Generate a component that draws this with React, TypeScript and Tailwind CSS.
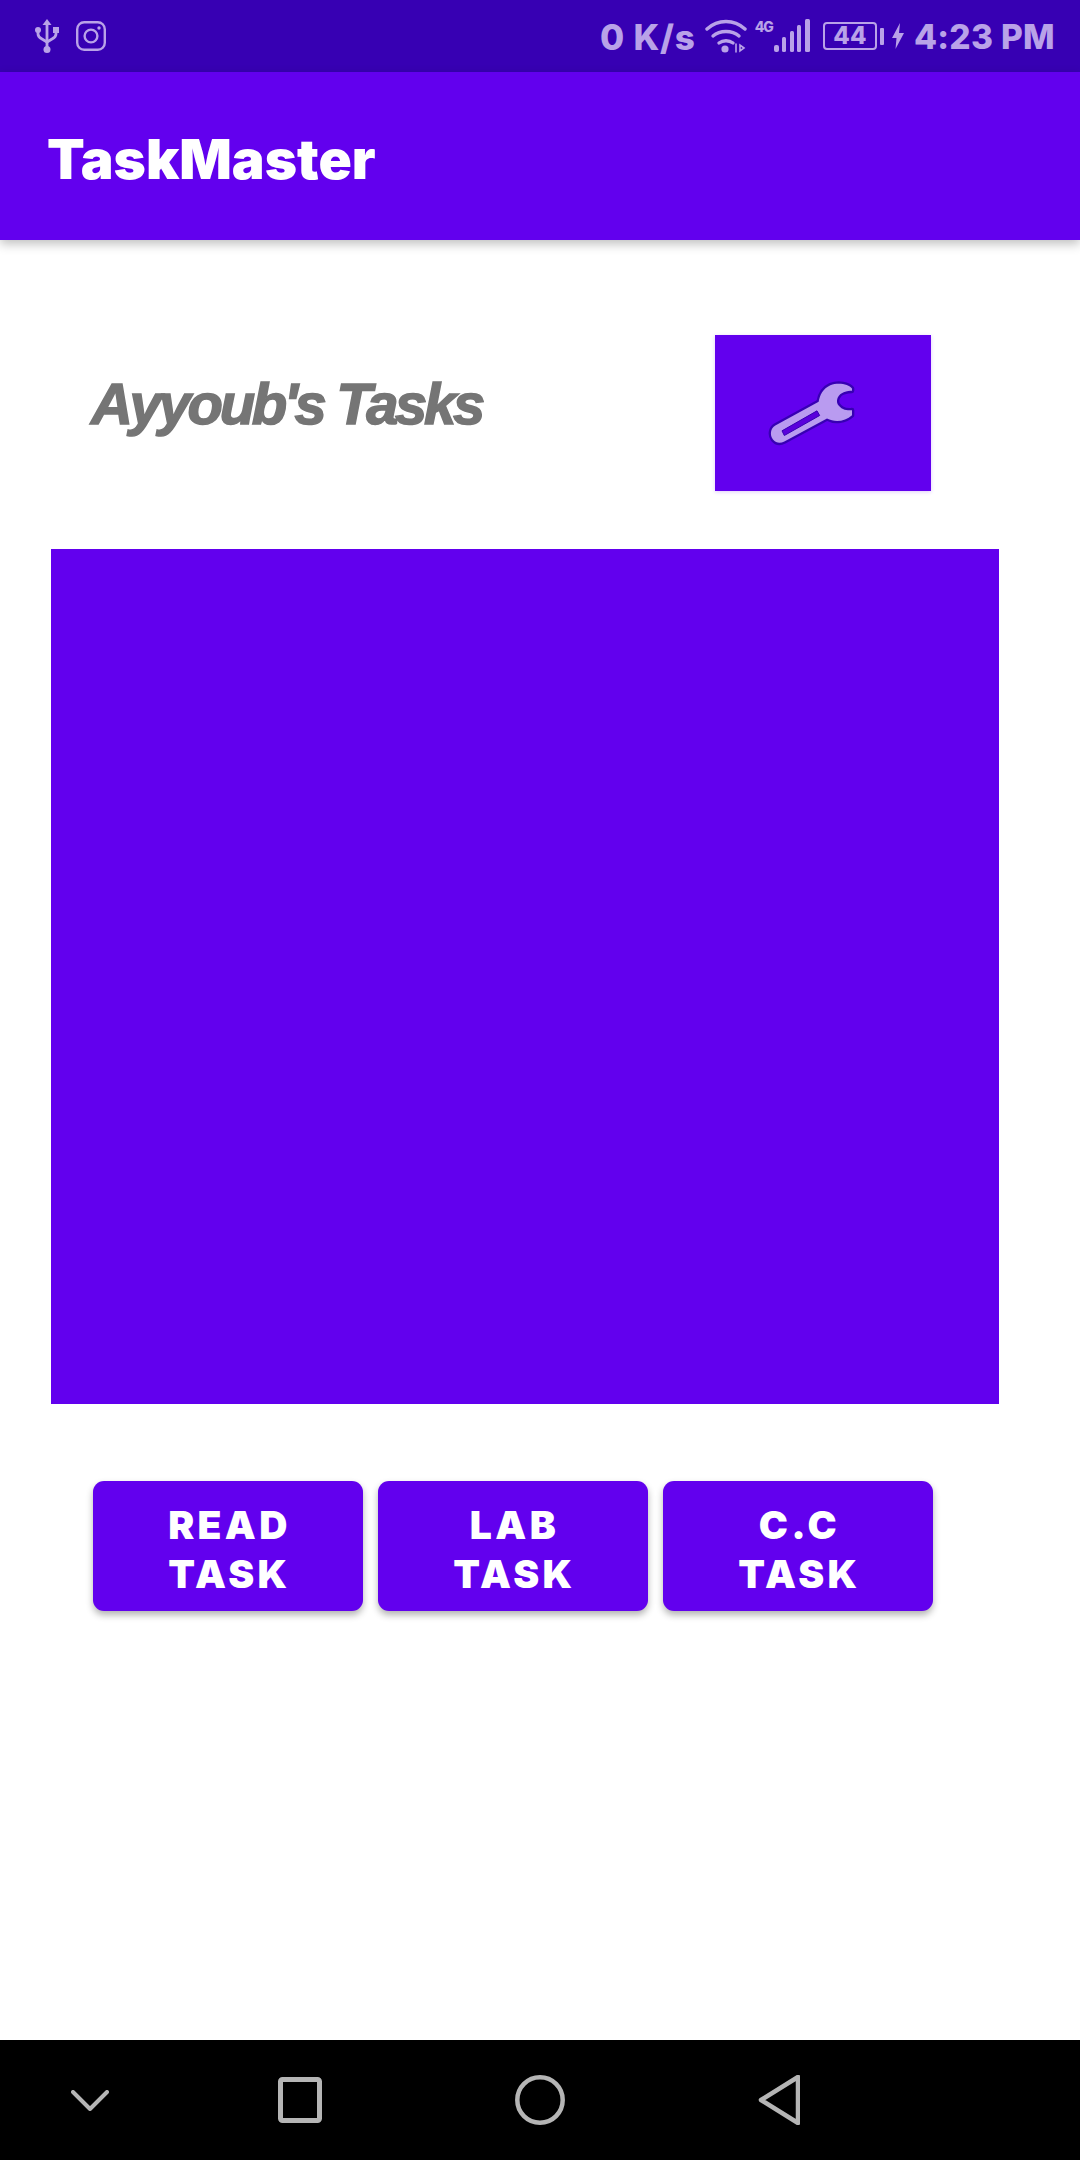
import React from "react";

const statusColor = "#b9a2e8";

function UsbIcon() {
  return (
    <svg width="24" height="34" viewBox="0 0 24 34" fill="none" stroke={statusColor} strokeWidth="2.8">
      <path d="M12 4v26" />
      <path d="M12 0l4.5 6h-9z" fill={statusColor} stroke="none" />
      <path d="M3 11v4c0 3 2 4 4 5l5 3 5-3c2-1 4-2 4-5v-4" />
      <circle cx="3" cy="11" r="3" fill={statusColor} stroke="none" />
      <rect x="18" y="8" width="6" height="6" fill={statusColor} stroke="none" />
      <circle cx="12" cy="30.5" r="3.5" fill={statusColor} stroke="none" />
    </svg>
  );
}

function InstaIcon() {
  return (
    <svg width="30" height="30" viewBox="0 0 30 30" fill="none" stroke={statusColor} strokeWidth="2.4">
      <rect x="1.2" y="1.2" width="27.6" height="27.6" rx="7" />
      <circle cx="15" cy="15" r="6.4" />
      <circle cx="23" cy="7" r="1.7" fill={statusColor} stroke="none" />
    </svg>
  );
}

function WifiIcon() {
  return (
    <svg width="42" height="34" viewBox="0 0 42 34" fill="none" stroke={statusColor} strokeWidth="3.4" strokeLinecap="round">
      <path d="M2 10c11-10 27-10 38 0" />
      <path d="M8 17c7-6 19-6 26 0" />
      <path d="M14 24c4-3 10-3 14 0" />
      <circle cx="20" cy="30" r="3.6" fill={statusColor} stroke="none" />
      <path d="M31 25v8M39 29l-4-3v6z" strokeWidth="1.6" />
    </svg>
  );
}

function SignalIcon() {
  return (
    <svg width="36" height="34" viewBox="0 0 36 34" fill={statusColor}>
      <rect x="0" y="26" width="5" height="7" rx="2" />
      <rect x="8" y="18" width="4" height="15" rx="1.5" />
      <rect x="16" y="12" width="4" height="21" rx="1.5" />
      <rect x="23" y="6" width="4" height="27" rx="1.5" />
      <rect x="31" y="0" width="5" height="33" rx="1.5" />
    </svg>
  );
}

function BoltIcon() {
  return (
    <svg width="12" height="26" viewBox="0 0 12 26" fill={statusColor}>
      <path d="M8 0L0 15h4.5L3.5 26 12 10H7z" />
    </svg>
  );
}

function WrenchIcon() {
  return (
    <svg width="90" height="67" viewBox="260 180 270 200">
      <path
        d="M515 205C505 192 475 186 450 195C428 205 418 225 415 245L285 316C270 325 268 345 278 358C288 370 300 370 312 364L440 295C465 308 495 303 515 285V270C500 272 482 268 472 252C466 238 474 222 490 216C500 213 508 212 515 212Z"
        fill="#b99bf0"
        stroke="#3700b3"
        strokeWidth="14"
        strokeLinejoin="round"
        paintOrder="stroke"
      />
      <path d="M305 332L410 272L418 286L312 346Z" fill="#5a00dc" stroke="#3700b3" strokeWidth="3" />
    </svg>
  );
}

function TaskButton({ top }: { top: string }) {
  return (
    <button className="flex h-[130px] w-[270px] flex-col items-center justify-center rounded-[11px] bg-[#6200ee] pt-[5px] pl-[3px] font-['Inter',sans-serif] text-[39px] leading-[49px] font-black tracking-[3.4px] text-white shadow-[0_4px_7px_rgba(0,0,0,0.3)]">
      <span>{top}</span>
      <span>TASK</span>
    </button>
  );
}

export default function App() {
  return (
    <div className="flex h-[2160px] w-[1080px] flex-col overflow-hidden bg-white">
      {/* status bar */}
      <div className="flex h-[72px] shrink-0 items-center bg-[#3700b3] pr-[25px] pl-[35px] font-['Inter',sans-serif] font-extrabold text-[#b9a2e8]">
        <UsbIcon />
        <div className="ml-[17px]">
          <InstaIcon />
        </div>
        <span className="mt-[2px] ml-auto text-[35px] tracking-[0.8px]">0 K/s</span>
        <div className="ml-[9px]">
          <WifiIcon />
        </div>
        <span className="mb-[18px] ml-[8px] text-[14px] leading-none tracking-[-1px]">4G</span>
        <div className="ml-[1px]">
          <SignalIcon />
        </div>
        <div className="ml-[13px] flex h-[28px] w-[54px] items-center justify-center rounded-[4px] border-2 border-[#b9a2e8] text-[24px] leading-none">
          44
        </div>
        <div className="ml-[3px] h-[17px] w-[4px] rounded-[1px] bg-[#b9a2e8]" />
        <div className="ml-[8px]">
          <BoltIcon />
        </div>
        <span className="mt-[2px] ml-[10px] text-[33.5px] tracking-[0.3px]">4:23 PM</span>
      </div>

      {/* app bar */}
      <div className="relative z-10 flex h-[168px] shrink-0 items-center bg-[#6200ee] pt-[7px] pl-[47px] font-['Inter',sans-serif] text-[55px] font-black text-white shadow-[0_4px_10px_rgba(0,0,0,0.25)]">
        TaskMaster
      </div>

      {/* content */}
      <main className="flex-1 pt-[95px]">
        <div className="flex items-start justify-between pr-[149px] pl-[91px]">
          <h1 className="mt-[29px] font-['Liberation_Sans',sans-serif] text-[58px] leading-[80px] font-bold tracking-[-3.3px] text-[#757575] italic [-webkit-text-stroke:1.5px_#757575]">
            Ayyoub's Tasks
          </h1>
          <button className="flex h-[156px] w-[216px] items-center justify-center bg-[#6200ee] pr-[22px] shadow-[0_1px_4px_rgba(98,0,238,0.2)]">
            <WrenchIcon />
          </button>
        </div>

        <div className="mt-[58px] ml-[51px] h-[855px] w-[948px] bg-[#6200ee]" />

        <div className="mt-[77px] ml-[93px] flex gap-[15px]">
          <TaskButton top="READ" />
          <TaskButton top="LAB" />
          <TaskButton top="C.C" />
        </div>
      </main>

      {/* nav bar */}
      <div className="flex h-[120px] shrink-0 items-center bg-black">
        <svg className="ml-[71px]" width="38" height="21" viewBox="0 0 38 21" fill="none" stroke="#b5b5b5" strokeWidth="4" strokeLinecap="round" strokeLinejoin="round">
          <path d="M2 2l17 17L36 2" />
        </svg>
        <svg className="ml-[169px]" width="44" height="46" viewBox="0 0 44 46" fill="none" stroke="#b5b5b5" strokeWidth="5">
          <rect x="2.5" y="2.5" width="39" height="41" rx="2" />
        </svg>
        <svg className="ml-[193px]" width="50" height="50" viewBox="0 0 50 50" fill="none" stroke="#b5b5b5" strokeWidth="4.5">
          <circle cx="25" cy="25" r="22.7" />
        </svg>
        <svg className="ml-[193px]" width="42" height="50" viewBox="0 0 42 50" fill="none" stroke="#b5b5b5" strokeWidth="4.5" strokeLinejoin="round">
          <path d="M40 2L3 25l37 23z" />
        </svg>
      </div>
    </div>
  );
}
